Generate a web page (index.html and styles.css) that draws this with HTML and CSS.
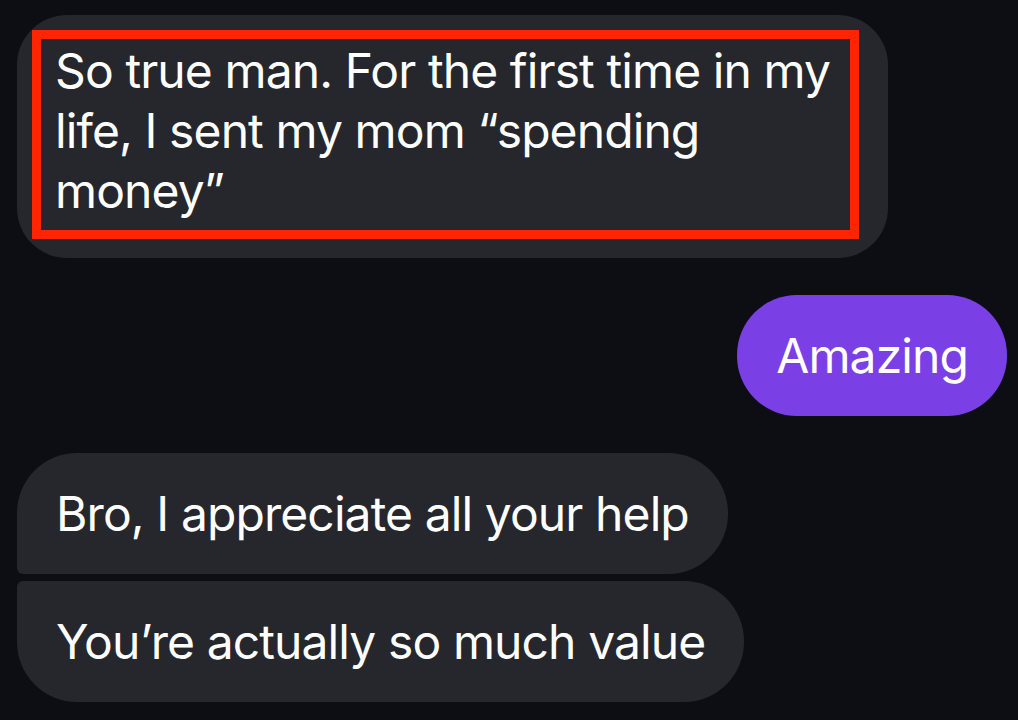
FILE: index.html
```html
<!DOCTYPE html>
<html lang="en">
<head>
    <meta charset="UTF-8">
    <meta name="viewport" content="width=device-width, initial-scale=1.0">
    <link rel="stylesheet" href="styles.css">
    <title>Chat</title>
</head>
<body>
    <main class="chat">
        <div class="chat__row chat__row--in">
            <div class="bubble bubble--single bubble--marked">
                <p class="bubble__mark">So true man. For the first time in my life, I sent my mom &ldquo;spending money&rdquo;</p>
            </div>
        </div>

        <div class="chat__row chat__row--out">
            <div class="bubble bubble--out">Amazing</div>
        </div>

        <div class="chat__group">
            <div class="chat__row chat__row--in">
                <div class="bubble bubble--first">Bro, I appreciate all your help</div>
            </div>
            <div class="chat__row chat__row--in">
                <div class="bubble bubble--last">You&rsquo;re actually so much value</div>
            </div>
        </div>
    </main>
</body>
</html>
```

FILE: styles.css
```css
body {
    margin: 0;
    padding: 0;
    background-color: #0c0e13;
    color: #ffffff;
    font-family: Inter, "Noto Sans", sans-serif;
    width: 1018px;
    height: 720px;
    overflow: hidden;
}

.chat {
    display: flex;
    flex-direction: column;
    gap: 37px;
    padding: 15px 11px 0 17px;
}

.chat__group {
    display: flex;
    flex-direction: column;
    gap: 7px;
}

.chat__row {
    display: flex;
}
.chat__row--in {
    justify-content: flex-start;
}
.chat__row--out {
    justify-content: flex-end;
}

.bubble {
    background-color: #25272c;
    font-size: 48px;
    line-height: 61px;
    letter-spacing: -0.9px;
    padding: 30px 39px;
    border-radius: 60px;
    white-space: nowrap;
}
.bubble--out {
    background-color: #7b3fe6;
}
.bubble--first {
    border-bottom-left-radius: 6px;
}
.bubble--last {
    border-top-left-radius: 6px;
}

.bubble--marked {
    padding: 15px 29px 19px 15px;
    border-radius: 50px;
    white-space: normal;
}
.bubble__mark {
    margin: 0;
    width: 790px;
    line-height: 60px;
    padding: 2px 5px 9px 14px;
    border: 9px solid #ff2500;
}
```
